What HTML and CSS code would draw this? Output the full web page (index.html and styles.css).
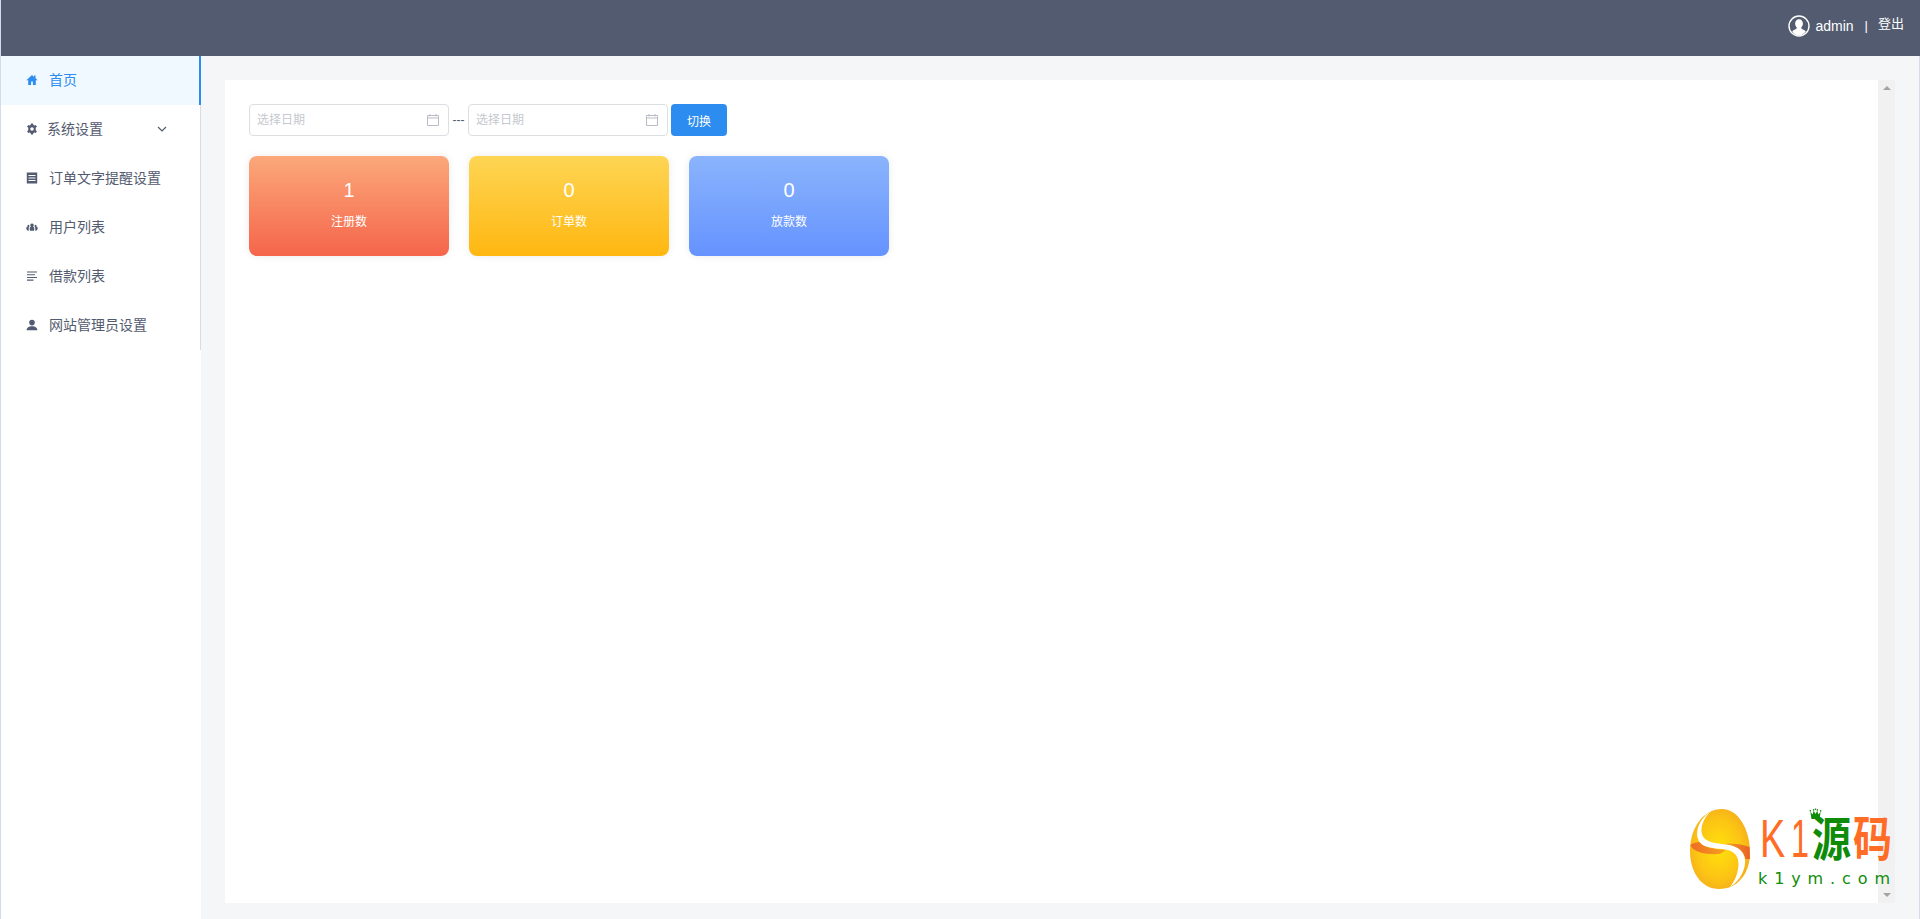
FILE: index.html
```html
<!DOCTYPE html>
<html lang="zh-CN">
<head>
<meta charset="utf-8">
<title>首页</title>
<link rel="stylesheet" href="styles.css">
</head>
<body>
<div class="app">
  <header class="topbar">
    <svg class="avatar" viewBox="0 0 22 22" width="22" height="22">
      <circle cx="11" cy="11" r="10" fill="#535b70" stroke="#fff" stroke-width="1.4"/>
      <path d="M11 4.200c2.400 0 3.900 1.900 3.900 4.400 0 1.700-.8 3.200-1.700 4 0 .9.400 1.300 1.300 1.700 1.400.6 2.700 1.100 3.300 2.100A9.600 9.600 0 0 1 11 20.500a9.600 9.600 0 0 1-6.800-4.100c.6-1 1.900-1.500 3.300-2.100.9-.4 1.300-.8 1.300-1.700-.9-.8-1.700-2.300-1.700-4 0-2.500 1.500-4.400 3.900-4.400z" fill="#fff"/>
    </svg>
    <span class="user">admin</span>
    <span class="sep">|</span>
    <span class="logout">登出</span>
  </header>
  <div class="body">
    <nav class="sidebar">
      <a class="item active">
        <svg class="ico" viewBox="0 0 12 12"><path d="M6 1 .4 6.300h1.800V11h2.900V7.600h1.800V11h2.900V6.300h1.800L9.500 4.300V1.600H8v1.300z" fill="currentColor"/></svg>
        <span>首页</span>
      </a>
      <a class="item sub">
        <svg class="ico" viewBox="0 0 12 12"><path fill-rule="evenodd" d="M4.900.4h2.200l.3 1.500.9.500 1.500-.5 1.100 1.900-1.200 1 .1 1.200-.1 1.200 1.200 1-1.100 1.900-1.500-.5-.9.5-.3 1.500H4.900l-.3-1.500-.9-.5-1.500.5L1.100 8.200l1.200-1-.1-1.200.1-1.200-1.200-1 1.100-1.900 1.500.5.9-.5zM6 4.200a1.800 1.800 0 1 0 0 3.600 1.800 1.800 0 0 0 0-3.600z" fill="currentColor"/></svg>
        <span>系统设置</span>
        <svg class="chev" viewBox="0 0 10 6"><path d="M1 1l4 4 4-4" fill="none" stroke="currentColor" stroke-width="1.200"/></svg>
      </a>
      <a class="item">
        <svg class="ico" viewBox="0 0 12 12"><path fill-rule="evenodd" d="M.8.6h10.400v10.800H.8zM2.500 3v1.100h7V3zm0 2.500v1.100h7V5.500zm0 2.500v1.100h7V8z" fill="currentColor"/></svg>
        <span>订单文字提醒设置</span>
      </a>
      <a class="item">
        <svg class="ico" viewBox="0 0 12 12"><path d="M6 2.400a1.800 1.800 0 0 1 1.100 3.200C8 6 8.300 7 8.300 8.100c0 .6-.1 1.100-.3 1.600H4c-.2-.5-.3-1-.3-1.600C3.700 7 4 6 4.900 5.600A1.800 1.800 0 0 1 6 2.400zM2.300 3.800a1.200 1.200 0 0 1 .9 2c-.4.600-.5 1.400-.5 2.300 0 .5.100 1 .2 1.600H1.700C.9 9 .2 8 .2 7.100c0-.7.700-1.200 1.500-1.300a1.200 1.200 0 0 1 .6-2zm7.400 0a1.200 1.200 0 0 1 .6 2c.8.100 1.500.6 1.500 1.300 0 .9-.7 1.900-1.500 2.600H9.100c.1-.6.200-1.100.2-1.600 0-.9-.1-1.700-.5-2.300a1.200 1.200 0 0 1 .9-2z" fill="currentColor"/></svg>
        <span>用户列表</span>
      </a>
      <a class="item">
        <svg class="ico" viewBox="0 0 12 12"><path d="M1 1.500h10v1.100H1zM1 4.200h8v1.100H1zM1 6.900h10V8H1zM1 9.600h6.500v1.100H1z" fill="currentColor"/></svg>
        <span>借款列表</span>
      </a>
      <a class="item">
        <svg class="ico" viewBox="0 0 12 12"><path d="M6 .8a2.800 2.800 0 1 1 0 5.600A2.800 2.800 0 0 1 6 .8zM.6 11.200c0-2.500 2.400-4 5.400-4s5.400 1.500 5.400 4z" fill="currentColor"/></svg>
        <span>网站管理员设置</span>
      </a>
    </nav>
    <main class="main">
      <section class="panel">
        <div class="content">
          <div class="filters">
            <div class="date">
              <span class="ph">选择日期</span>
              <svg class="cal" viewBox="0 0 14 14"><path d="M1.500 2.500h11v10h-11zM1.500 5h11M4 1v2.500M10 1v2.500" fill="none" stroke="#b9bdc6" stroke-width="1"/></svg>
            </div>
            <span class="dash">---</span>
            <div class="date">
              <span class="ph">选择日期</span>
              <svg class="cal" viewBox="0 0 14 14"><path d="M1.500 2.500h11v10h-11zM1.500 5h11M4 1v2.500M10 1v2.500" fill="none" stroke="#b9bdc6" stroke-width="1"/></svg>
            </div>
            <button class="switch">切换</button>
          </div>
          <div class="cards">
            <div class="card orange"><div class="num">1</div><div class="label">注册数</div></div>
            <div class="card yellow"><div class="num">0</div><div class="label">订单数</div></div>
            <div class="card blue"><div class="num">0</div><div class="label">放款数</div></div>
          </div>
        </div>
        <div class="scrollbar">
          <span class="arrow up"></span>
          <span class="arrow down"></span>
        </div>
      </section>
    </main>
  </div>
</div>
<div class="logo">
  <svg class="egg" viewBox="0 0 60 80" width="60" height="80">
    <defs>
      <radialGradient id="eg" cx="48%" cy="50%" r="62%">
        <stop offset="0" stop-color="#ffe20c"/>
        <stop offset=".6" stop-color="#fcc414"/>
        <stop offset="1" stop-color="#f2a51f"/>
      </radialGradient>
      <linearGradient id="og" x1="0" x2="1" y1="0" y2="0">
        <stop offset="0" stop-color="#ee6a25"/>
        <stop offset="1" stop-color="#f7a41c"/>
      </linearGradient>
      <linearGradient id="og2" x1="0" x2="1" y1="0" y2="0">
        <stop offset="0" stop-color="#f7a41c"/>
        <stop offset="1" stop-color="#e9602a"/>
      </linearGradient>
    </defs>
    <path d="M32 0C48 0 60 20 60 44 60 64 48 80 29 80 12 80 0 64 0 42 0 18 14 0 32 0z" fill="url(#eg)"/>
    <path d="M.3 36C3 42 12 46 30 45l6-4C26 40 14 39 10 33 7 33 3 34 .3 36z" fill="url(#og)"/>
    <path d="M34 35c10-1 18 0 25.500 3L60 50h-4.500C54 42 46 37 34 35z" fill="url(#og2)"/>
    <path d="M20 3C10 10 4 22 9 32c4 8 19 7 29 9 8 2 12 9 10 19-1 7-4 13-8 18 10-6 16-18 15-28-2-12-13-14-23-15-10-1-18-3-20-10-2-7 2-16 8-22z" fill="#fff"/>
  </svg>
  <div class="brand">
    <div class="brand-top">
      <span class="k">K</span><span class="one">1</span>
      <span class="yuan">源<svg class="crown" viewBox="0 0 16 15"><path d="M1 4l3 3 1.500-4L8 6.500 10.500 3 12 7l3-3-1.500 8h-11z" fill="#0f8b0a"/><circle cx="1" cy="3" r="1" fill="#0f8b0a"/><circle cx="5.500" cy="2" r="1" fill="#0f8b0a"/><circle cx="8" cy="1" r="1" fill="#0f8b0a"/><circle cx="10.500" cy="2" r="1" fill="#0f8b0a"/><circle cx="15" cy="3" r="1" fill="#0f8b0a"/></svg></span>
      <span class="ma">码</span>
    </div>
    <div class="brand-url">k1ym.com</div>
  </div>
</div>
</body>
</html>
```

FILE: styles.css
```css
* { box-sizing: border-box; }
html, body { margin: 0; height: 100%; overflow: hidden; }
body {
  font-family: "Liberation Sans", "Noto Sans CJK SC", sans-serif;
  font-size: 13px;
  color: #535b70;
  background: #fff;
}
.app {
  height: 919px;
  display: flex;
  flex-direction: column;
  border-left: 1px solid #d3dcea;
  border-right: 1px solid #d3dcea;
}
.topbar {
  height: 56px;
  flex: none;
  background: #535b70;
  color: #fff;
  display: flex;
  align-items: center;
  justify-content: flex-end;
  padding: 0 16px 6px 0;
  margin-right: -1px;
}
.avatar { margin: 1px 5px 0 0; }
.user { font-size: 14px; margin-top: 1px; }
.sep { margin: 0 10px 0 11px; font-size: 13px; }
.logout { font-size: 13px; margin-top: -5px; }
.body { flex: 1; display: flex; min-height: 0; }
.sidebar { width: 200px; flex: none; background: #fff; }
.item {
  height: 49px;
  display: flex;
  align-items: center;
  padding: 0 0 1px 25px;
  border-right: 1px solid #d8dce5;
  color: #535b70;
  font-size: 14px;
}
.item span { margin-bottom: 2px; }
.ico { width: 12px; height: 12px; flex: none; margin-right: 11px; }
.item.sub .ico { margin-right: 9px; }
.item.active {
  background: #f0f9ff;
  color: #2d8cf0;
  border-right: 2px solid #2d8cf0;
}
.chev { width: 10px; height: 6px; margin-left: 54px; color: #535b70; }
.main {
  flex: 1;
  background: #f5f6f8;
  padding: 24px 24px 16px 24px;
  min-width: 0;
}
.panel {
  height: 100%;
  background: #fff;
  display: flex;
}
.content { flex: 1; padding: 24px 24px; }
.filters { display: flex; align-items: center; height: 32px; }
.date {
  width: 200px;
  height: 32px;
  border: 1px solid #dcdee2;
  border-radius: 4px;
  display: flex;
  align-items: center;
  justify-content: space-between;
  padding: 0 8px 0 7px;
  background: #fff;
}
.ph { color: #c5c8ce; font-size: 12px; margin-bottom: 3px; }
.cal { width: 14px; height: 14px; }
.dash { width: 19px; text-align: center; font-size: 12px; color: #535b70; padding-bottom: 1px; }
.switch {
  width: 56px;
  height: 32px;
  margin-left: 3px;
  border: 0;
  border-radius: 4px;
  background: #2d8cf0;
  color: #fff;
  font: 12px "Liberation Sans", "Noto Sans CJK SC", sans-serif;
}
.cards { display: flex; gap: 20px; margin-top: 20px; }
.card {
  width: 200px;
  height: 100px;
  border-radius: 8px;
  color: #fff;
  text-align: center;
  box-shadow: 0 0 8px rgba(0, 0, 0, .08);
  padding-top: 23px;
}
.orange { background: linear-gradient(180deg, #fba87a, #f5654c); }
.yellow { background: linear-gradient(180deg, #fed554, #ffb711); }
.blue { background: linear-gradient(180deg, #8ab4fc, #6593ff); }
.num { font-size: 20px; line-height: 23px; }
.label { font-size: 12px; line-height: 16px; margin-top: 12px; }
.scrollbar {
  width: 17px;
  flex: none;
  background: #f1f1f1;
  display: flex;
  flex-direction: column;
  justify-content: space-between;
  align-items: center;
  padding: 6px 0;
}
.arrow { width: 0; height: 0; border-left: 4px solid transparent; border-right: 4px solid transparent; }
.arrow.up { border-bottom: 4px solid #a3a3a3; }
.arrow.down { border-top: 4px solid #a3a3a3; }

/* watermark sits over the page, so it is placed on the canvas */
.logo {
  position: absolute;
  left: 1690px;
  top: 809px;
  display: flex;
  gap: 10px;
}
.brand { width: 134px; padding-top: 6px; }
.brand-top { display: flex; align-items: center; height: 46px; }
.k, .one {
  display: block;
  color: #ff6c26;
  font-size: 54px;
  line-height: 46px;
  font-family: "Liberation Sans", sans-serif;
  transform-origin: left center;
}
.k { width: 31px; transform: scaleX(.7); }
.one { width: 21px; transform: scaleX(.6); }
.yuan, .ma {
  position: relative;
  display: block;
  font-size: 39px;
  line-height: 46px;
  font-weight: 700;
  font-family: "Noto Sans CJK SC", sans-serif;
  transform: translateY(-3px) scaleY(1.22);
}
.yuan { color: #0f8b0a; width: 41px; }
.ma { color: #ff6c26; }
.crown {
  position: absolute;
  left: -4px;
  top: 1px;
  width: 15px;
  height: 11px;
}
.brand-url {
  color: #0f8b0a;
  font-size: 16px;
  line-height: 16px;
  letter-spacing: 6.9px;
  font-family: "DejaVu Sans", sans-serif;
  margin: 10px 0 0 -2px;
  white-space: nowrap;
}
```
